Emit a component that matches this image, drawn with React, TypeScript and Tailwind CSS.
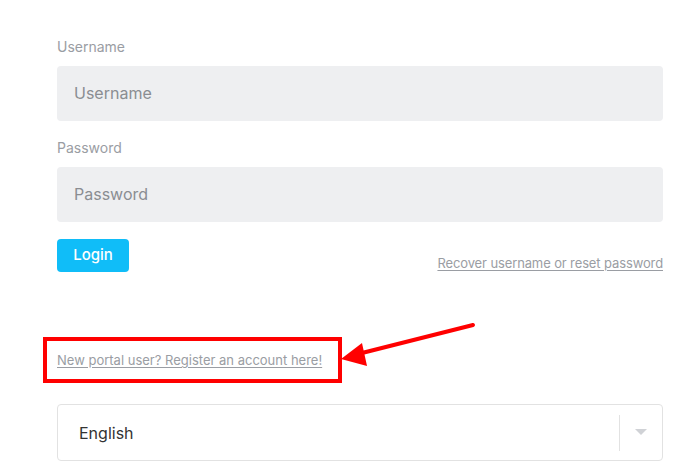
export default function App() {
  return (
    <div className="relative w-[685px] h-[471px] bg-white overflow-hidden" style={{ fontFamily: 'Inter, "Liberation Sans", sans-serif' }}>
      <div className="ml-[57px] w-[606px] pt-[37px]">
        <label className="block text-[14px] leading-[20px] text-[#9a9da3]">Username</label>
        <input
          className="mt-[9px] block w-full h-[55px] rounded-[4px] bg-[#eeeff1] px-[17px] pb-[2px] text-[16px] text-[#555] placeholder-[#8a8d92] outline-none"
          placeholder="Username"
        />
        <label className="mt-[17px] block text-[14px] leading-[20px] text-[#9a9da3]">Password</label>
        <input
          type="password"
          className="mt-[9px] block w-full h-[55px] rounded-[4px] bg-[#eeeff1] px-[17px] pb-[2px] text-[16px] text-[#555] placeholder-[#8a8d92] outline-none"
          placeholder="Password"
        />
        <div className="mt-[17px] flex items-end justify-between">
          <button className="h-[33px] w-[72px] rounded-[4px] bg-[#10bdf8] text-[15px] font-medium text-white">Login</button>
          <a href="#" className="mb-[1px] text-[13px] leading-[16px] tracking-[-0.12px] text-[#9a9da3] underline underline-offset-2">
            Recover username or reset password
          </a>
        </div>
      </div>

      <div className="ml-[43px] mt-[65px] w-[299px] h-[46px] border-[4px] border-[#ff0000] flex items-center pl-[10px]">
        <a href="#" className="text-[13px] leading-[16px] text-[#9a9da3] underline underline-offset-2">
          New portal user? Register an account here!
        </a>
      </div>

      <div className="ml-[57px] mt-[21px] w-[606px] h-[57px] rounded-[4px] border border-[#e2e2e2] flex items-center">
        <span className="flex-1 pl-[21px] text-[16px] text-[#333]">English</span>
        <div className="h-[36px] w-px bg-[#e2e2e2]" />
        <div className="w-[42px] flex justify-center">
          <svg width="12" height="7" viewBox="0 0 12 7">
            <path d="M0 0 L12 0 L6 6 Z" fill="#d0d2d6" />
          </svg>
        </div>
      </div>

      <svg className="absolute left-0 top-0 pointer-events-none" width="685" height="471">
        <line x1="473" y1="325" x2="358" y2="354" stroke="#ff0000" strokeWidth="4" strokeLinecap="round" />
        <path d="M341 359 L362 343 L367 366 Z" fill="#ff0000" />
      </svg>
    </div>
  );
}
